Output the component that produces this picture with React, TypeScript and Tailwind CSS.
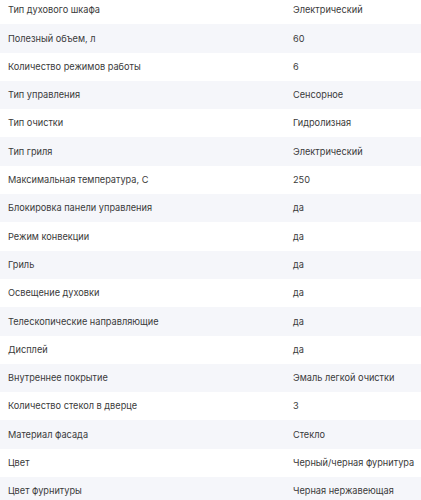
import React from "react";

const rows: [string, string][] = [
  ["Тип духового шкафа", "Электрический"],
  ["Полезный объем, л", "60"],
  ["Количество режимов работы", "6"],
  ["Тип управления", "Сенсорное"],
  ["Тип очистки", "Гидролизная"],
  ["Тип гриля", "Электрический"],
  ["Максимальная температура, С", "250"],
  ["Блокировка панели управления", "да"],
  ["Режим конвекции", "да"],
  ["Гриль", "да"],
  ["Освещение духовки", "да"],
  ["Телескопические направляющие", "да"],
  ["Дисплей", "да"],
  ["Внутреннее покрытие", "Эмаль легкой очистки"],
  ["Количество стекол в дверце", "3"],
  ["Материал фасада", "Стекло"],
  ["Цвет", "Черный/черная фурнитура"],
  ["Цвет фурнитуры", "Черная нержавеющая"],
];

export default function App() {
  return (
    <div className="w-[421px] h-[500px] overflow-hidden bg-white font-['Inter',sans-serif] text-[9.2px] text-[#3a3a3a]">
      <div className="-mt-[4px] flex flex-col">
        {rows.map(([k, v], i) => (
          <div
            key={k}
            className={`grid grid-cols-[293px_1fr] items-center h-[28.3px] ${i % 2 === 1 ? "bg-[#f5f6fa]" : "bg-white"}`}
          >
            <div className="pl-[8px] whitespace-nowrap">{k}</div>
            <div className="whitespace-nowrap">{v}</div>
          </div>
        ))}
      </div>
    </div>
  );
}
